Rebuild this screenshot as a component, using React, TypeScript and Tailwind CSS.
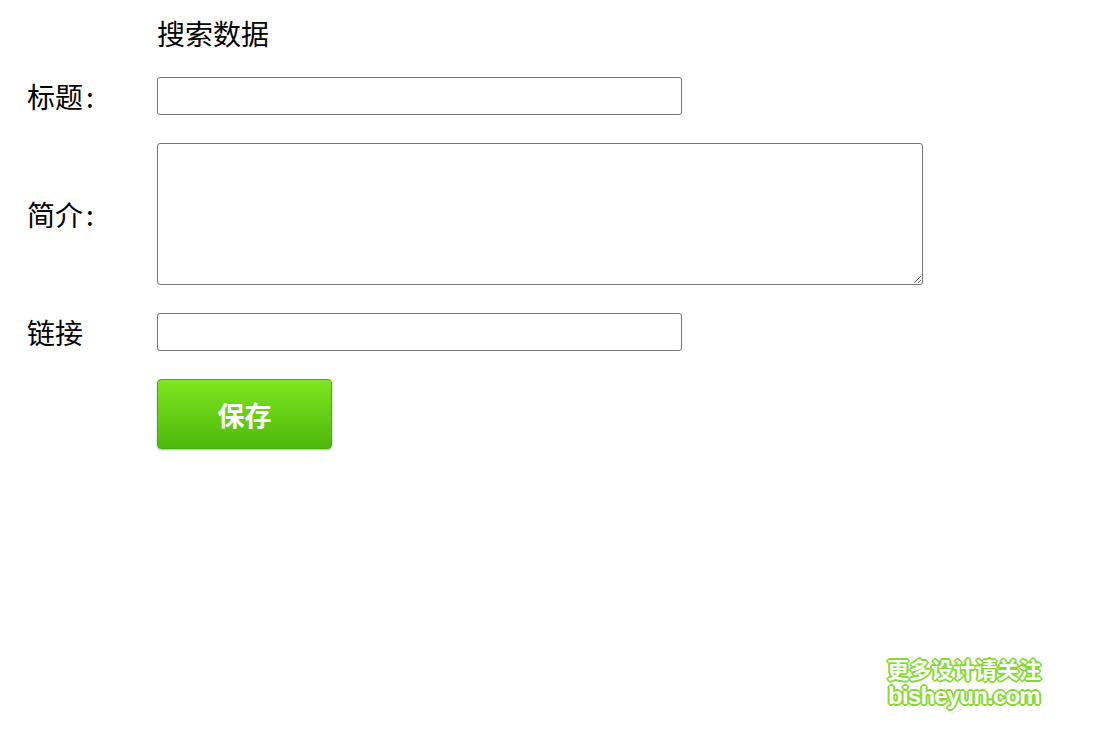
import React from 'react';

const labelCls = 'w-[130px] shrink-0 text-[28px] leading-none text-black';

export default function App() {
  return (
    <div className="relative w-[1114px] h-[733px] bg-white font-['Noto_Sans_CJK_SC','Noto_Sans',sans-serif]">
      <form className="flex flex-col gap-[28px] pl-[27px] pt-[16px]">
        <div className="flex items-center h-[33px]">
          <div className="w-[130px] shrink-0" />
          <div className="text-[28px] leading-none text-black">搜索数据</div>
        </div>

        <div className="flex items-center">
          <label className={labelCls}>标题<span className="ml-[3px]">:</span></label>
          <input type="text" className="w-[525px] h-[38px] border border-[#767676] rounded-[3px] px-2 text-base outline-none" />
        </div>

        <div className="flex items-center">
          <label className={labelCls}>简介<span className="ml-[3px]">:</span></label>
          <textarea className="w-[766px] h-[142px] border border-[#767676] rounded-[3px] px-2 py-1 text-base outline-none resize" />
        </div>

        <div className="flex items-center">
          <label className={labelCls}>链接</label>
          <input type="text" className="w-[525px] h-[38px] border border-[#767676] rounded-[3px] px-2 text-base outline-none" />
        </div>

        <div className="flex items-center">
          <div className="w-[130px] shrink-0" />
          <button
            type="button"
            className="w-[175px] h-[70px] rounded-[4px] border border-[#4caa10] bg-gradient-to-b from-[#7ee61e] to-[#4db80e] text-white text-[27px] font-bold leading-none shadow-[0_1px_2px_rgba(0,0,0,0.3)]"
          >
            保存
          </button>
        </div>
      </form>

      <div className="absolute left-[887px] top-[655px] flex flex-col items-center text-white font-bold leading-[27px] [text-shadow:0_0_2px_#86d834,1px_1px_0_#86d834,-1px_-1px_0_#86d834,1px_-1px_0_#86d834,-1px_1px_0_#86d834,0_2px_0_#86d834,2px_0_0_#86d834,0_-2px_0_#86d834,-2px_0_0_#86d834]">
        <span className="text-[22px]">更多设计请关注</span>
        <span className="text-[24px] font-['Liberation_Sans',sans-serif] tracking-[-0.8px]">bisheyun.com</span>
      </div>
    </div>
  );
}
